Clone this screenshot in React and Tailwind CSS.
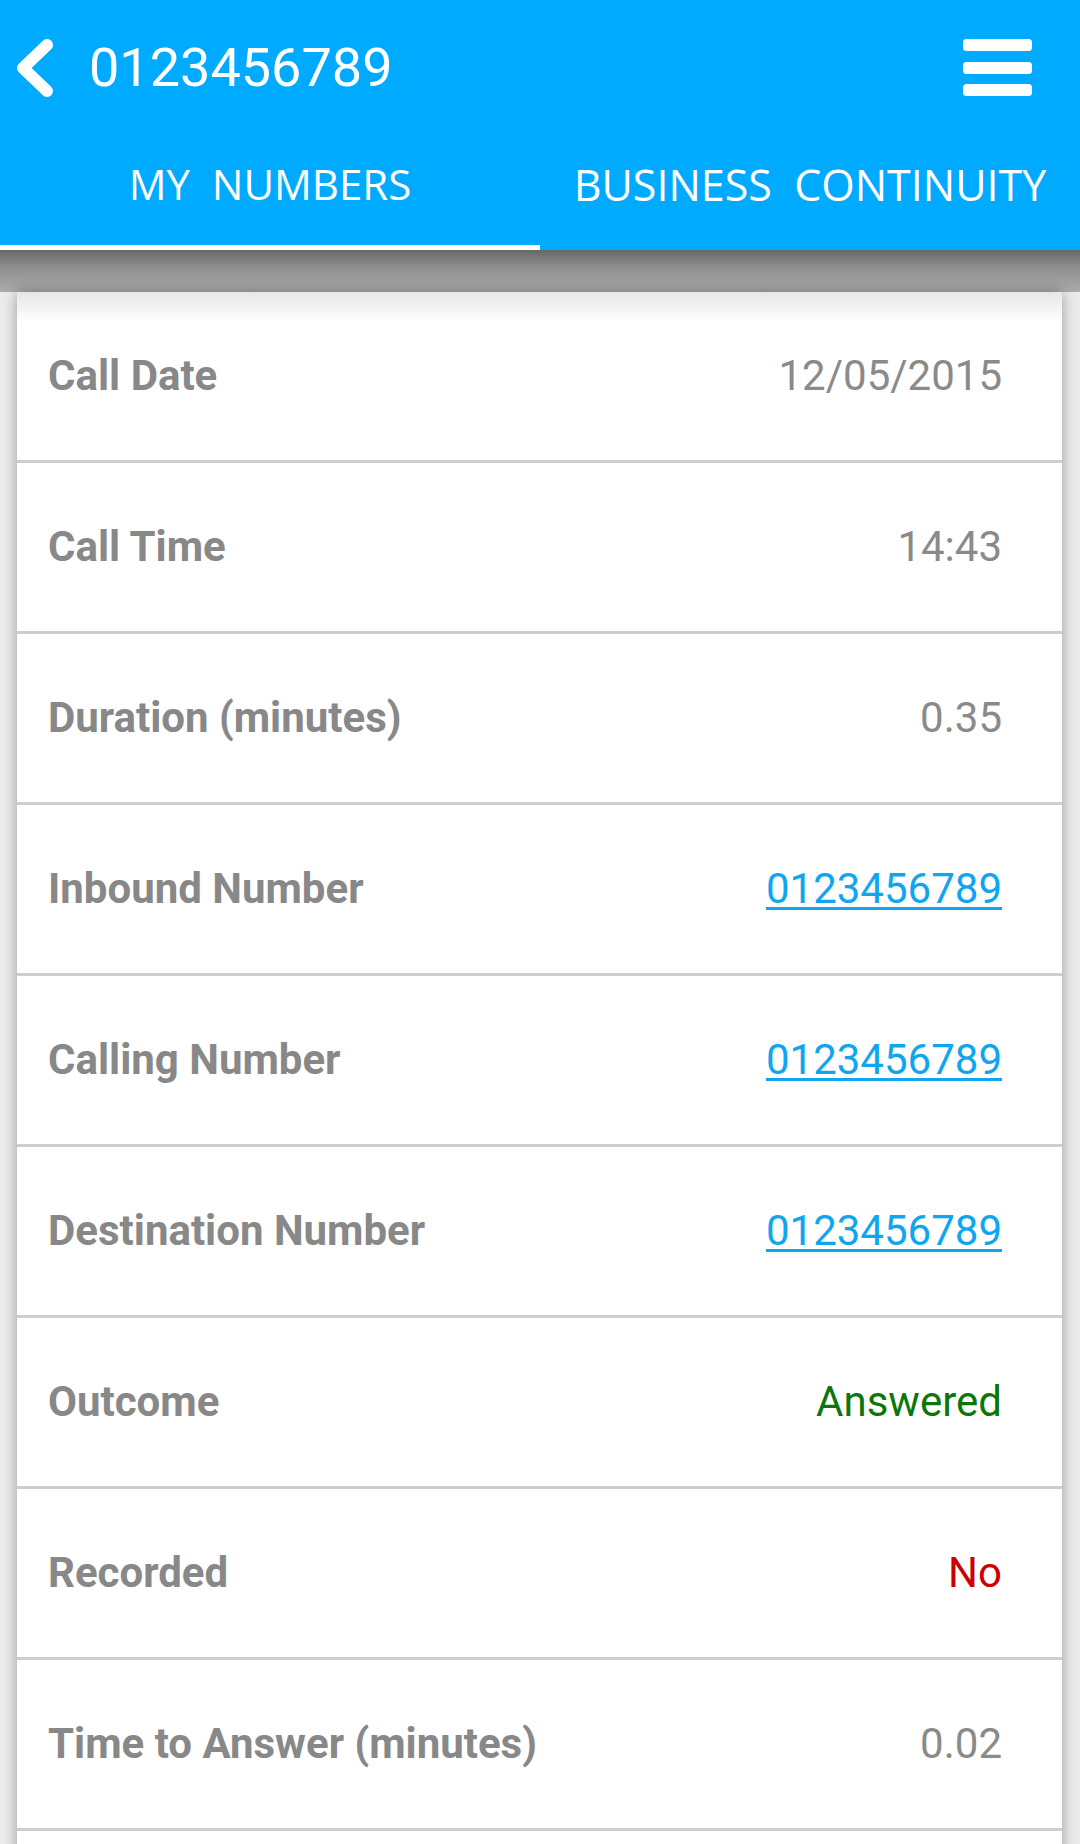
import React from "react";

const rows = [
  { label: "Call Date", value: "12/05/2015", kind: "plain" },
  { label: "Call Time", value: "14:43", kind: "plain" },
  { label: "Duration (minutes)", value: "0.35", kind: "plain" },
  { label: "Inbound Number", value: "0123456789", kind: "link" },
  { label: "Calling Number", value: "0123456789", kind: "link" },
  { label: "Destination Number", value: "0123456789", kind: "link" },
  { label: "Outcome", value: "Answered", kind: "green" },
  { label: "Recorded", value: "No", kind: "red" },
  { label: "Time to Answer (minutes)", value: "0.02", kind: "plain" },
];

function Value({ kind, value }) {
  if (kind === "link") {
    return (
      <a className="text-[#10a5ef] underline decoration-[3px] underline-offset-[4px] font-['Roboto',sans-serif] text-[42px] leading-none">
        {value}
      </a>
    );
  }
  const color =
    kind === "green" ? "text-[#0b760b]" : kind === "red" ? "text-[#cc0000]" : "text-[#8a8a8a]";
  return (
    <span className={`${color} font-['Roboto',sans-serif] text-[42px] leading-none`}>{value}</span>
  );
}

export default function App() {
  return (
    <div className="min-h-screen bg-[#ececec] font-['Roboto',sans-serif]">
      <header className="relative z-10 bg-[#00aaff]">
        <div className="flex h-[136px] items-center">
          <svg
            className="ml-[15px] shrink-0"
            width="40"
            height="60"
            viewBox="0 0 40 60"
            fill="none"
          >
            <path
              d="M32 7 L8 30 L32 53"
              stroke="#ffffff"
              strokeWidth="12"
              strokeLinecap="round"
              strokeLinejoin="round"
            />
          </svg>
          <h1 className="ml-[34px] text-[54px] leading-none text-white font-normal">
            0123456789
          </h1>
          <svg
            className="ml-auto mr-[48px] shrink-0"
            width="69"
            height="58"
            viewBox="0 0 69 58"
          >
            <rect x="0" y="0" width="69" height="12" rx="3.5" fill="#ffffff" />
            <rect x="0" y="23" width="69" height="12" rx="3.5" fill="#ffffff" />
            <rect x="0" y="45" width="69" height="12" rx="3.5" fill="#ffffff" />
          </svg>
        </div>
        <nav className="flex">
          <div className="flex h-[114px] flex-1 items-start justify-center border-b-[5px] border-white pt-[27px]">
            <span className="whitespace-pre font-['Open_Sans',sans-serif] text-[42px] leading-none text-white">
              MY  NUMBERS
            </span>
          </div>
          <div className="flex h-[114px] flex-1 items-start justify-center border-b-[5px] border-transparent pt-[27px]">
            <span className="whitespace-pre font-['Open_Sans',sans-serif] text-[43px] leading-none text-white">
              BUSINESS  CONTINUITY
            </span>
          </div>
        </nav>
        <div className="pointer-events-none absolute left-0 right-0 top-full h-[42px] bg-[linear-gradient(to_bottom,rgba(0,0,0,0.56),rgba(0,0,0,0.4)_40%,rgba(0,0,0,0.27))]" />
      </header>

      <main className="pl-[17px] pr-[18px] pt-[42px]">
        <div className="bg-white shadow-[0_0_14px_rgba(0,0,0,0.35)]">
          {rows.map((r, i) => (
            <div
              key={r.label}
              className={`flex h-[171px] items-center justify-between border-b-[3px] border-[#cdcdcd] pl-[31px] pr-[60px] ${
                i === 0 ? "bg-[linear-gradient(to_bottom,#e6e6e6,#ffffff_30px)]" : ""
              }`}
            >
              <span className="text-[42px] font-bold leading-none text-[#888888]">{r.label}</span>
              <Value kind={r.kind} value={r.value} />
            </div>
          ))}
          <div className="h-[171px]" />
        </div>
      </main>
    </div>
  );
}
